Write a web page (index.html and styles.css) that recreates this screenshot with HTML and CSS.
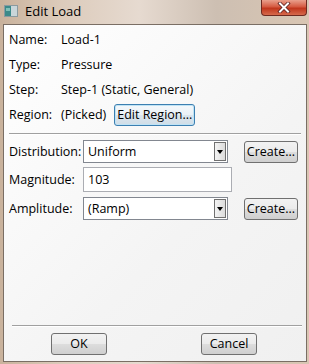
FILE: index.html
```html
<!DOCTYPE html>
<html>
<head>
<meta charset="utf-8">
<link rel="stylesheet" href="styles.css">
</head>
<body>
<div class="window">
  <div class="titlebar">
    <svg class="app-icon" width="14" height="12" viewBox="0 0 14 12">
      <rect x="0.5" y="0.5" width="13" height="11" fill="#dfe7ea" stroke="#8a9aa0"/>
      <rect x="1" y="1" width="6" height="10" fill="#3b8a8a"/>
      <rect x="7" y="1" width="6" height="10" fill="#c9d6da"/>
      <rect x="2" y="3" width="4" height="3" fill="#7fc0b8"/>
    </svg>
    <span class="title">Edit Load</span>
    <div class="close">
      <svg width="14" height="11" viewBox="0 0 14 11">
        <path d="M3 1.5 L11 9.5 M11 1.5 L3 9.5" stroke="#5a2020" stroke-width="3.6" stroke-linecap="square"/>
        <path d="M3 1.5 L11 9.5 M11 1.5 L3 9.5" stroke="#ffffff" stroke-width="2" stroke-linecap="square"/>
      </svg>
    </div>
  </div>
  <div class="client">
    <div class="info">
      <span class="lbl">Name:</span><span>Load-1</span>
      <span class="lbl">Type:</span><span>Pressure</span>
      <span class="lbl">Step:</span><span>Step-1 (Static, General)</span>
      <span class="lbl">Region:</span>
      <span class="region"><span>(Picked)</span><button class="btn btn-focus">Edit Region...</button></span>
    </div>
    <div class="sep"></div>
    <div class="form">
      <span class="lbl">Distribution:</span>
      <div class="combo"><span>Uniform</span><span class="arrow"></span></div>
      <button class="btn btn-create">Create...</button>
      <span class="lbl">Magnitude:</span>
      <div class="input">103</div>
      <span></span>
      <span class="lbl">Amplitude:</span>
      <div class="combo"><span>(Ramp)</span><span class="arrow"></span></div>
      <button class="btn btn-create">Create...</button>
    </div>
    <div class="spacer"></div>
    <div class="sep sep-bottom"></div>
    <div class="actions">
      <button class="btn btn-action">OK</button>
      <button class="btn btn-action">Cancel</button>
    </div>
  </div>
</div>
</body>
</html>
```
FILE: styles.css
```css
* { box-sizing: border-box; }
html, body { margin: 0; padding: 0; }
body {
  width: 309px;
  height: 364px;
  overflow: hidden;
  font-family: "Open Sans", "Noto Sans", sans-serif;
  font-size: 12.5px;
  color: #000;
}
.window {
  width: 309px;
  height: 364px;
  display: flex;
  flex-direction: column;
  padding: 0 2px 2px 3px;
  background: linear-gradient(90deg, #c9b29c 0%, #dccbbb 20%, #e6dad0 45%, #cdbfb2 70%, #d9c6b3 100%);
}
.titlebar {
  height: 24px;
  flex: none;
  display: flex;
  align-items: flex-start;
}
.app-icon { margin-top: 5px; margin-left: 1px; flex: none; }
.title {
  margin-left: 7px;
  margin-top: 2px;
  font-size: 13px;
  color: #000;
}
.close {
  margin-left: auto;
  width: 46px;
  height: 16px;
  border: 1px solid #6e2a20;
  border-top: none;
  border-radius: 0 0 4px 4px;
  background: linear-gradient(#e9a08c 0%, #d55a41 45%, #c0361c 55%, #d66a4c 100%);
  display: flex;
  align-items: center;
  justify-content: center;
}
.client {
  flex: 1;
  display: flex;
  flex-direction: column;
  border: 1px solid #7a6e64;
  background: linear-gradient(135deg, #ffffff 0%, #f4f4f4 60%, #f0f0f0 100%);
  padding: 0 4px 6px 5px;
}
.info {
  display: grid;
  grid-template-columns: 52px auto;
  grid-auto-rows: 25px;
  align-items: center;
  padding-top: 2px;
}
.region { display: flex; align-items: center; gap: 8px; }
.btn {
  font-family: inherit;
  font-size: 12.5px;
  color: #000;
  padding: 0;
  border: 1px solid #707070;
  border-radius: 3px;
  background: linear-gradient(#f2f2f2 0%, #ebebeb 50%, #dddddd 51%, #cfcfcf 100%);
  line-height: 18px;
}
.btn-focus {
  width: 81px;
  height: 22px;
  border-color: #3c7fb1;
  box-shadow: inset 0 0 0 1px #bfe3f5;
  background: linear-gradient(#f4f8fb 0%, #eaf1f6 50%, #dbe6ee 51%, #d0dde7 100%);
}
.sep {
  height: 2px;
  margin: 6px 1px 0 0;
  border-top: 1px solid #a0a0a0;
  border-bottom: 1px solid #ffffff;
}
.form {
  display: grid;
  grid-template-columns: 74px 149px auto;
  grid-template-rows: 23px 25px 25px;
  row-gap: 4px;
  align-items: center;
  margin-top: 5px;
}
.combo {
  width: 145px;
  height: 23px;
  border: 1px solid #828790;
  background: #fff;
  display: flex;
  align-items: center;
  justify-content: space-between;
  padding: 0 1px 0 4px;
}
.arrow {
  width: 12px;
  height: 19px;
  border: 1px solid #707070;
  background: linear-gradient(90deg, #f3f3f3, #dcdcdc);
  position: relative;
}
.arrow::after {
  content: "";
  position: absolute;
  left: 2px;
  top: 7px;
  border-left: 3.5px solid transparent;
  border-right: 3.5px solid transparent;
  border-top: 4px solid #000;
}
.input {
  width: 149px;
  height: 25px;
  border: 1px solid #abadb3;
  background: #fff;
  padding: 0 4px;
  display: flex;
  align-items: center;
}
.btn-create {
  width: 54px;
  height: 22px;
  margin-left: 12px;
}
.spacer { flex: 1; }
.sep-bottom { margin: 0 0 0 3px; }
.actions {
  display: flex;
  padding-left: 42px;
  gap: 94px;
  margin-top: 6px;
}
.btn-action {
  width: 56px;
  height: 22px;
}
```
